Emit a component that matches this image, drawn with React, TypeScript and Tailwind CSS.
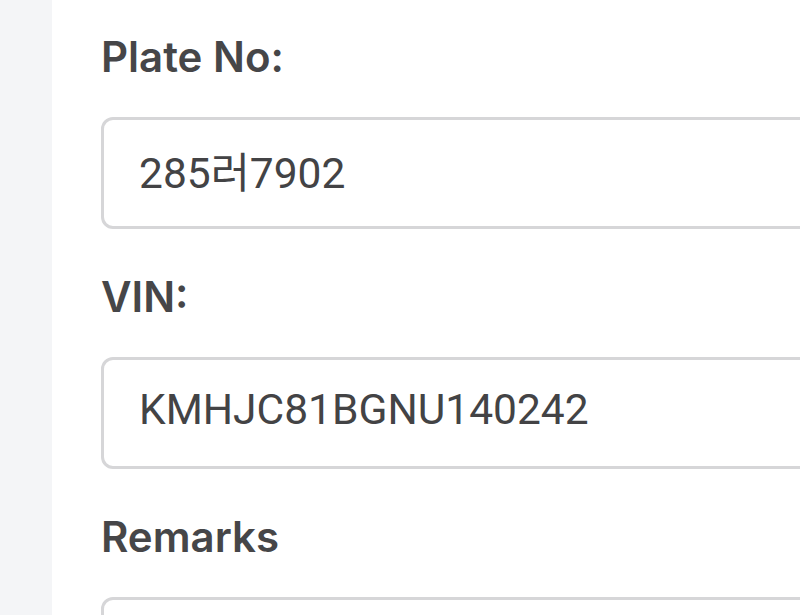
import React from "react";

const fields = [
  { label: "Plate No:", value: "285러7902" },
  { label: "VIN:", value: "KMHJC81BGNU140242" },
];

function Field({ label, value }: { label: string; value: string }) {
  return (
    <div className="mb-[44px]">
      <label className="block mb-[36px] text-[42px] leading-[48px] font-semibold text-[#464648] font-['Inter','Noto_Sans_CJK_KR',sans-serif]">
        {label}
      </label>
      <input
        readOnly
        value={value}
        className="block w-[760px] h-[112px] rounded-[12px] border-[3px] border-[#d6d6d8] bg-white pl-[35px] pb-[8px] text-[42.5px] text-[#434345] outline-none font-['Roboto','Noto_Sans_CJK_KR',sans-serif]"
      />
    </div>
  );
}

export default function App() {
  return (
    <div className="flex w-[800px] h-[615px] overflow-hidden bg-white">
      <div className="w-[52px] shrink-0 bg-[#f4f5f7]" />
      <div className="flex-1 pl-[49px] pt-[33px]">
        {fields.map((f) => (
          <Field key={f.label} label={f.label} value={f.value} />
        ))}
        <label className="block mb-[36px] text-[42px] leading-[48px] font-semibold text-[#464648] font-['Inter','Noto_Sans_CJK_KR',sans-serif]">
          Remarks
        </label>
        <div className="w-[760px] h-[112px] rounded-[12px] border-[3px] border-[#d6d6d8] bg-white" />
      </div>
    </div>
  );
}
